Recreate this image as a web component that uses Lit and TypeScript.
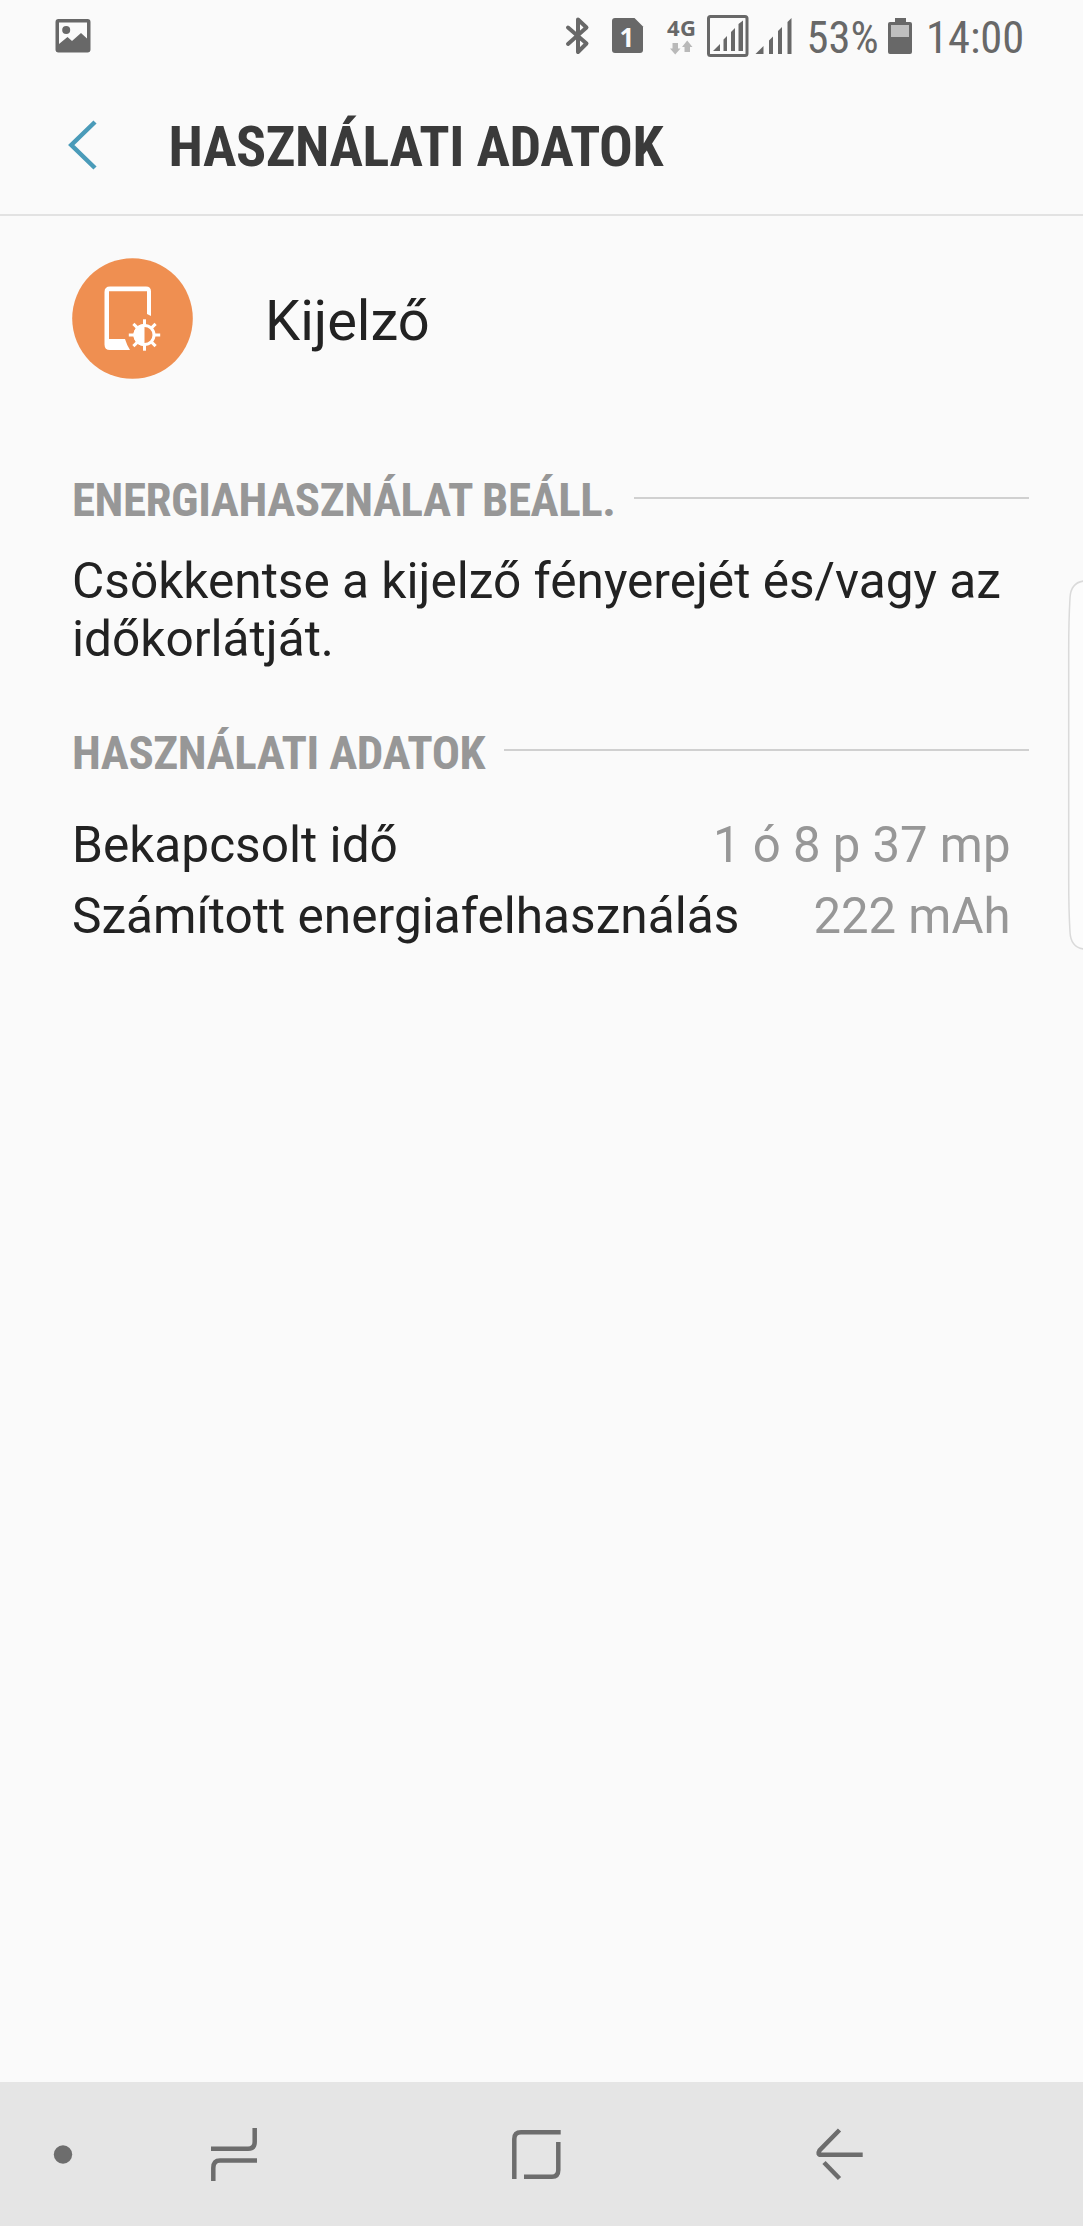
import { LitElement, html, css, svg } from "lit";
import { customElement, property } from "lit/decorators.js";

@customElement("status-bar")
class StatusBar extends LitElement {
  static styles = css`
    :host { display: flex; align-items: flex-start; height: 75px; box-sizing: border-box; padding-left: 55px; color: #686868; }
    svg { display: block; fill: currentColor; flex: none; }
    .grow { flex: 1; }
    .text { font: 400 44.5px/52px "Roboto Condensed", Roboto, sans-serif; font-stretch: 75%; white-space: nowrap; padding-top: 12px; flex: none; }
    .percent { width: 79.500px; margin-left: 6.500px; }
    .clock { width: 102px; padding-right: 55px; }
    .tech { font: 700 22px "Open Sans", "Noto Sans", sans-serif; }
    .sim { font: 700 26px "Noto Sans", sans-serif; fill: #fafafa; }
  `;
  render() {
    return html`
      <svg width="36" height="75" viewBox="55 0 36 75">
        <path fill-rule="evenodd" d="M58.500 19H87.500Q90.500 19 90.500 22V49.500Q90.500 52.500 87.500 52.500H58.500Q55.500 52.500 55.500 49.500V22Q55.500 19 58.500 19ZM59 22.500V44L67.500 37L72 41L81 33L87 38.500V22.500Z"/>
        <circle cx="66.200" cy="30" r="4"/>
      </svg>
      <div class="grow"></div>
      <svg width="240" height="75" viewBox="560 0 240 75">
        <path fill="none" stroke="currentColor" stroke-width="4" stroke-linejoin="round" stroke-linecap="round" d="M568 27.500L586.500 43.500L578 52V19.500L586.500 27.500L568 44"/>
        <path d="M615 18H634.500L643 26.500V50Q643 53 640 53H615Q612 53 612 50V21Q612 18 615 18Z"/>
        <text class="sim" x="619.500" y="46.500">1</text>
        <text class="tech" x="667" y="36" textLength="29">4G</text>
        <g fill="#b9b9b9">
          <path d="M672.500 43H678V48.500H680.500L675.200 54.500L670 48.500H672.500Z"/>
          <path d="M684.500 52V47H682L687.200 40.500L692.500 47H690V52Z"/>
        </g>
        <rect x="708.500" y="16.500" width="38.500" height="39" rx="2" fill="none" stroke="currentColor" stroke-width="3"/>
        <path d="M713 51L720 44V51ZM723.500 39.500L727 36V51H723.500ZM731 32L735 28V51H731ZM738.500 24L743 20.500V51H738.500Z"/>
        <path d="M755.500 54L763.500 46V54ZM769 40.500L773 36.500V54H769ZM778 31L782 27V54H778ZM787.500 22L791.500 18V54H787.500Z"/>
      </svg>
      <div class="text percent">53%</div>
      <svg width="40" height="75" viewBox="886 0 40 75">
        <path d="M895 18H906V22H910Q912 22 912 24V52Q912 54 910 54H890Q888 54 888 52V24Q888 22 890 22H895Z"/>
        <path fill="#bfbfbf" d="M891 25H909V37H891Z"/>
      </svg>
      <div class="text clock">14:00</div>
    `;
  }
}

@customElement("section-title")
class SectionTitle extends LitElement {
  @property() label = "";
  static styles = css`
    :host { display: flex; align-items: center; height: 56px; }
    .label { font: 700 47px/56px "Roboto Condensed", Roboto, sans-serif; font-stretch: 75%; letter-spacing: -0.450px; color: #979797; white-space: nowrap; }
    .rule { flex: 1; height: 2px; background: #d0d0d0; margin: 0 0 5px 18.500px; }
  `;
  render() {
    return html`<span class="label">${this.label}</span><span class="rule"></span>`;
  }
}

@customElement("nav-bar")
class NavBar extends LitElement {
  static styles = css`
    :host { display: block; height: 144px; background: #e5e5e5; }
    svg { display: block; color: #6d6d6d; }
  `;
  render() {
    return html`
      <svg width="1083" height="144" viewBox="0 2082 1083 144">
        <circle cx="63" cy="2154.500" r="9.200" fill="currentColor"/>
        <g fill="none" stroke="currentColor" stroke-width="4.500">
          <path d="M211 2148.700H248Q254.700 2148.700 254.700 2142V2128"/>
          <path d="M257 2160.500H220Q213.300 2160.500 213.300 2168V2181"/>
          <path d="M560.700 2132.300H521Q514.300 2132.300 514.300 2139V2179"/>
          <path d="M558.300 2142V2170Q558.300 2176.700 552 2176.700H524"/>
          <path d="M839.500 2130L819.500 2150.500Q817 2154.700 821 2154.700H862.700"/>
          <path d="M824 2162.500L839.500 2178.500"/>
        </g>
      </svg>
    `;
  }
}

const rays = [0, 45, 90, 135, 180, 225, 270, 315];

const usage = [
  { name: "Bekapcsolt idő", value: "1 ó 8 p 37 mp" },
  { name: "Számított energiafelhasználás", value: "222 mAh" },
];

@customElement("app-root")
class AppRoot extends LitElement {
  static styles = css`
    :host { display: flex; flex-direction: column; position: relative; width: 1083px; height: 2226px; overflow: hidden; background: #fafafa; color: #222; font-family: Roboto, sans-serif; }
    header { display: flex; align-items: center; height: 139px; border-bottom: 2px solid #e2e2e2; box-sizing: content-box; }
    header svg { display: block; margin-left: 60px; }
    h1 { margin: 5px 0 0 68.500px; font: 700 56px/66px "Roboto Condensed", Roboto, sans-serif; font-stretch: 75%; letter-spacing: -0.400px; color: #3a3a3a; white-space: nowrap; }
    main { flex: 1; padding: 42px 54px 0 72px; }
    .item { display: flex; align-items: center; }
    .item svg { display: block; }
    .name { font-size: 56px; line-height: 66px; margin: 5px 0 0 72px; }
    .first { margin-top: 93px; }
    .hint { margin: 25px 0 0; font-size: 49.600px; line-height: 57.700px; white-space: nowrap; }
    .second { margin-top: 56.100px; }
    .rows { margin-top: 29.500px; padding-right: 18.500px; }
    .row { display: flex; justify-content: space-between; align-items: baseline; height: 70.700px; font-size: 49.600px; line-height: 70.700px; white-space: nowrap; }
    .value { font-size: 49.100px; color: #979797; }
    .edge { position: absolute; right: 0; top: 578px; }
  `;
  render() {
    return html`
      <status-bar></status-bar>
      <header>
        <svg width="40" height="50" viewBox="60 119.500 40 50"><path d="M95 121.500L71.300 144.500L95 167.500" fill="none" stroke="#4a9bb9" stroke-width="4.500"/></svg>
        <h1>HASZNÁLATI ADATOK</h1>
      </header>
      <main>
        <div class="item">
          <svg width="121" height="121" viewBox="72 258 121 121">
            <circle cx="132.500" cy="318.500" r="60.300" fill="#ef8f51"/>
            <path fill="#fff" fill-rule="evenodd" d="M110 286.500H146Q151 286.500 151 291.500V316L147 314V291.300H109V339H125Q127 345.500 130 350H110Q104.500 350 104.500 344.500V292Q104.500 286.500 110 286.500Z"/>
            <circle cx="144.500" cy="335" r="9.500" fill="none" stroke="#fff" stroke-width="3"/>
            <path d="M144.500 324A11 11 0 0 0 144.500 346Z" fill="#fff"/>
            <g stroke="#fff" stroke-width="3">
              ${rays.map((a) => svg`<path d="M144.500 319.300V325" transform="rotate(${a} 144.500 335)"/>`)}
            </g>
          </svg>
          <span class="name">Kijelző</span>
        </div>
        <section-title class="first" label="ENERGIAHASZNÁLAT BEÁLL."></section-title>
        <p class="hint">Csökkentse a kijelző fényerejét és/vagy az<br>időkorlátját.</p>
        <section-title class="second" label="HASZNÁLATI ADATOK"></section-title>
        <div class="rows">
          ${usage.map((u) => html`<div class="row"><span>${u.name}</span><span class="value">${u.value}</span></div>`)}
        </div>
      </main>
      <nav-bar></nav-bar>
      <svg class="edge" width="16" height="374" viewBox="1067 578 16 374">
        <path d="M1084 581C1075 582 1070.500 587 1070 598Q1068.700 620 1068.700 650V880Q1068.700 910 1070 932C1070.500 943 1075 948 1084 949" fill="#fcfcfc" stroke="#dadada" stroke-width="1.500"/>
      </svg>
    `;
  }
}
